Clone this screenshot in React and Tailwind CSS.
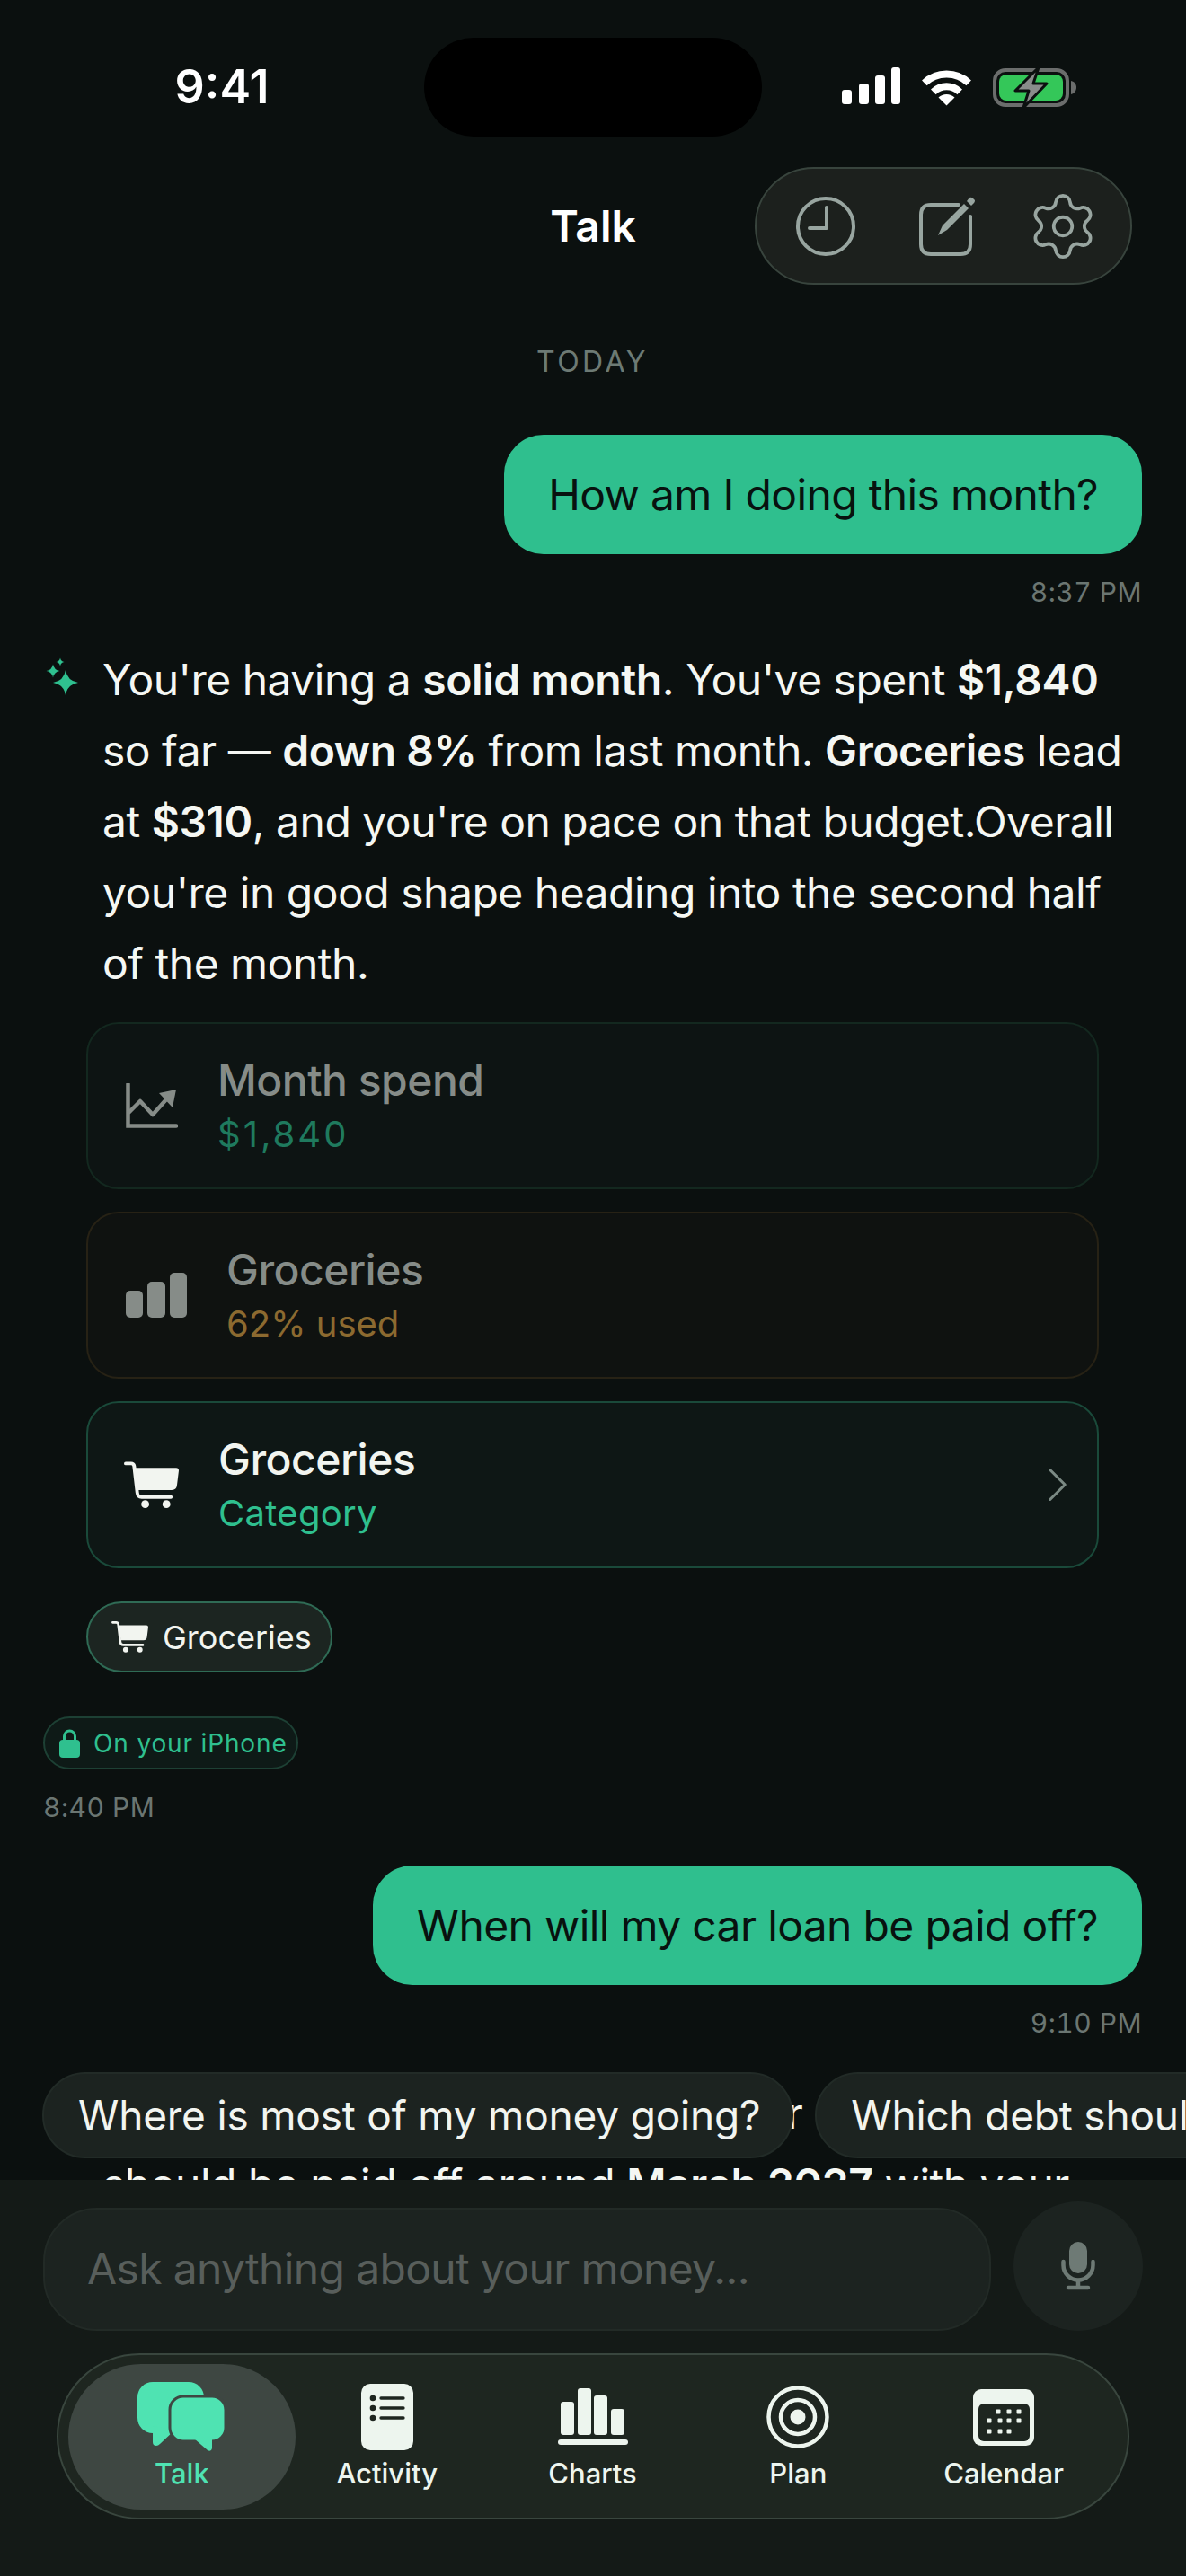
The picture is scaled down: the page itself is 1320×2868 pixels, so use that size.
import { ChevronRight, Settings } from "lucide-react";

function Signal() {
  return (
    <svg width="65" height="41" viewBox="0 0 65 41" fill="#fff">
      <rect x="0" y="25" width="11" height="16" rx="3" />
      <rect x="19" y="18" width="11" height="23" rx="3" />
      <rect x="37" y="9" width="11" height="32" rx="3" />
      <rect x="55" y="0" width="10" height="41" rx="3" />
    </svg>
  );
}

function Wifi() {
  return (
    <svg width="57" height="43" viewBox="0 0 57 43" fill="none" stroke="#fff" strokeWidth="8">
      <path d="M3.8 17.3 A36 36 0 0 1 53.2 17.3" />
      <path d="M13.8 27.3 A21 21 0 0 1 43.2 27.3" />
      <path d="M19.5 33.5 L28.5 42.5 L37.5 33.5 A13 13 0 0 0 19.5 33.5 Z" fill="#fff" stroke="none" />
    </svg>
  );
}

function Battery() {
  return (
    <svg width="94" height="45" viewBox="0 0 94 45" fill="none">
      <rect x="2" y="3" width="81" height="39" rx="12" stroke="#6b6d6c" strokeWidth="4" />
      <rect x="7" y="8" width="71" height="29" rx="8" fill="#34c759" />
      <path d="M87 15 C91 16 93 19 93 22 C93 26 91 29 87 30 Z" fill="#6b6d6c" />
      <path d="M51 0 L25 26 H40 L34 45 L60 18 H45 Z" fill="#8a8c8b" stroke="#0b100f" strokeWidth="3" strokeLinejoin="round" />
    </svg>
  );
}

function Clock() {
  return (
    <svg width="66" height="66" viewBox="0 0 66 66" fill="none" stroke="#98a5a0" strokeWidth="4">
      <circle cx="33" cy="33" r="31" />
      <path d="M34 12 V35 H15" strokeLinecap="round" strokeLinejoin="round" />
    </svg>
  );
}

function Compose() {
  return (
    <svg width="66" height="66" viewBox="0 0 66 66" fill="none" stroke="#98a5a0" strokeWidth="4" className="ml-[6px]">
      <path d="M44 9 H13 Q2 9 2 20 V53 Q2 64 13 64 H46 Q57 64 57 53 V22" strokeLinecap="round" />
      <path d="M21 43 L26 32 L50 8 L55 13 L31 37 Z" fill="#98a5a0" stroke="none" />
      <path d="M53 5 L56 1 Q58 0 60 2 L62 4 Q62 6 61 7 L58 10 Z" fill="#98a5a0" stroke="none" />
    </svg>
  );
}

function Sparkle() {
  const star = (x, y, r) =>
    `M${x} ${y - r} Q${x + r * 0.14} ${y - r * 0.14} ${x + r} ${y} Q${x + r * 0.14} ${y + r * 0.14} ${x} ${y + r} Q${x - r * 0.14} ${y + r * 0.14} ${x - r} ${y} Q${x - r * 0.14} ${y - r * 0.14} ${x} ${y - r} Z`;
  return (
    <svg width="40" height="44" viewBox="0 0 40 44" fill="#2fc08f" className="shrink-0 mt-[14px]">
      <path d={star(25, 29, 14)} />
      <path d={star(11, 16, 7.5)} />
      <path d={star(19, 6, 4.5)} />
    </svg>
  );
}

function Cart({ className }) {
  return (
    <svg viewBox="0 0 62 53" fill="#f2f5f0" className={className}>
      <path d="M2 2 H8 Q11 2 11.500 5 L15 35 Q15.500 40 20 40 H53" fill="none" stroke="#f2f5f0" strokeWidth="4" strokeLinecap="round" />
      <path d="M12 7 H59 Q62 7 62 10 L60 26 Q59.500 32 54 32 H16 Z" />
      <circle cx="24" cy="48" r="4.500" />
      <circle cx="48" cy="48" r="4.500" />
    </svg>
  );
}

function TrendIcon() {
  return (
    <svg width="58" height="50" viewBox="0 0 58 50" fill="none" stroke="#868c88" strokeWidth="4.500" className="shrink-0">
      <path d="M2.500 1 V47.500 H56" strokeLinecap="round" />
      <path d="M3 33 L16 20 L30 35 L46 17" strokeLinejoin="round" />
      <path d="M37 11 L56 7 L52 27 Z" fill="#868c88" stroke="none" />
    </svg>
  );
}

function BarsIcon() {
  return (
    <svg width="68" height="50" viewBox="0 0 68 50" fill="#868c88" className="shrink-0">
      <rect x="0" y="20" width="19" height="30" rx="5" />
      <rect x="24" y="10" width="20" height="40" rx="5" />
      <rect x="49" y="0" width="19" height="50" rx="5" />
    </svg>
  );
}

function TalkIcon() {
  return (
    <svg width="100" height="80" viewBox="0 0 100 80" fill="#4fe3b2">
      <rect x="1" y="1" width="74" height="57" rx="17" />
      <path d="M18 50 V68 Q18 72 22 72 Q24 72 26 70 L42 55 Z" />
      <rect x="37" y="17" width="62" height="50" rx="15" stroke="#3e4742" strokeWidth="3" />
      <path d="M64 64 L79 77 Q83 79 84 75 V64 Z" />
    </svg>
  );
}

function ActivityIcon() {
  return (
    <svg width="58" height="74" viewBox="0 0 58 74" fill="#edf5ee">
      <rect width="58" height="74" rx="10" />
      <g fill="#1e2620">
        <circle cx="13" cy="16" r="3.300" />
        <circle cx="13" cy="27" r="3.300" />
        <circle cx="13" cy="38" r="3.300" />
      </g>
      <path d="M22 16 H47 M22 27 H47 M22 38 H47" stroke="#1e2620" strokeWidth="3.300" strokeLinecap="round" />
    </svg>
  );
}

function ChartsIcon() {
  return (
    <svg width="78" height="64" viewBox="0 0 78 64" fill="#edf5ee">
      <rect x="3" y="15" width="15" height="37" rx="3" />
      <rect x="22" y="0" width="15" height="52" rx="3" />
      <rect x="40" y="8" width="15" height="44" rx="3" />
      <rect x="59" y="23" width="15" height="29" rx="3" />
      <rect x="0" y="57" width="78" height="6" rx="3" />
    </svg>
  );
}

function PlanIcon() {
  return (
    <svg width="70" height="70" viewBox="0 0 70 70" fill="none" stroke="#edf5ee" strokeWidth="4.500">
      <circle cx="35" cy="35" r="32.500" />
      <circle cx="35" cy="35" r="19" />
      <circle cx="35" cy="35" r="8.500" fill="#edf5ee" stroke="none" />
    </svg>
  );
}

function CalendarIcon() {
  const dots = [
    [28, 25], [40, 25], [51, 25],
    [18, 35], [30, 35], [40, 35], [51, 35],
    [18, 47], [30, 47], [40, 47],
  ];
  return (
    <svg width="68" height="63" viewBox="0 0 68 63">
      <rect width="68" height="63" rx="9" fill="#edf5ee" />
      <rect x="6" y="16" width="57" height="42" rx="6" fill="#1e2620" />
      {dots.map(([x, y]) => (
        <rect key={`${x}-${y}`} x={x - 2.500} y={y - 2.500} width="5" height="5" rx="1" fill="#edf5ee" />
      ))}
    </svg>
  );
}

function MicIcon() {
  return (
    <svg width="38" height="54" viewBox="0 0 38 54" fill="none" stroke="#6e7a75" strokeWidth="4.500" strokeLinecap="round">
      <rect x="9" y="0" width="20" height="35" rx="10" fill="#6e7a75" stroke="none" />
      <path d="M2.500 22 V26 A16.500 16.500 0 0 0 35.500 26 V22" />
      <path d="M19 43 V50 M8 51 H30" />
    </svg>
  );
}

function UserBubble({ children }) {
  return (
    <div className="flex justify-end">
      <div className="h-[133px] flex items-center px-[49px] rounded-[44px] bg-[#2fbf8e] text-[#08120f] text-[48px] tracking-[-0.65px] whitespace-nowrap">
        {children}
      </div>
    </div>
  );
}

function Time({ children, className }) {
  return <div className={`text-[30px] leading-[36px] tracking-[0.5px] tabular-nums text-[#6b7672] ${className}`}>{children}</div>;
}

function Bold({ children }) {
  return <b className="font-semibold tracking-[-0.4px]">{children}</b>;
}

function ActionCard({ icon, title, sub, titleColor, subClass, cardColor, chevron }) {
  return (
    <div className={`h-[186px] mx-[48px] flex items-center pl-[42px] pr-[11px] gap-[44px] rounded-[36px] border-2 ${cardColor}`}>
      {icon}
      <div className="flex-1">
        <div className={`text-[48px] leading-[60px] font-medium tracking-[-0.5px] ${titleColor}`}>{title}</div>
        <div className={`text-[40px] leading-[54px] mt-[3px] ${subClass}`}>{sub}</div>
      </div>
      {chevron && <ChevronRight size={66} strokeWidth={1.1} color="#7b8a84" />}
    </div>
  );
}

function Suggestion({ children }) {
  return (
    <div className="h-[96px] shrink-0 flex items-center pl-[38px] pr-[35px] rounded-full bg-[#1c2320] border-2 border-[#222b27] text-[#f2f5f0] text-[46px] tracking-[-0.2px] whitespace-nowrap">
      {children}
    </div>
  );
}

function NavItem({ icon, label, active, className }) {
  return (
    <div className={`flex flex-col items-center justify-center ${className}`}>
      <div className="h-[80px] flex items-center justify-center">{icon}</div>
      <div className={`mt-[3px] text-[31px] leading-[40px] font-medium ${active ? "text-[#4fe3b2]" : "text-[#edf5ee]"}`}>{label}</div>
    </div>
  );
}

export default function App() {
  return (
    <div className="w-[1320px] h-[2868px] flex flex-col overflow-hidden bg-[#0b100f] font-['Inter',sans-serif]">
      {/* Status bar */}
      <div className="h-[186px] shrink-0 flex items-start pt-[42px]">
        <div className="w-[472px] h-[110px] flex items-center justify-center pl-[22px] text-white text-[52px] font-semibold">9:41</div>
        <div className="w-[376px] h-[110px] rounded-[55px] bg-black" />
        <div className="flex-1 flex items-start pt-[33px] pl-[89px] gap-[23px]">
          <Signal />
          <Wifi />
          <Battery />
        </div>
      </div>

      {/* Header */}
      <div className="h-[131px] shrink-0 grid grid-cols-3 items-center pr-[60px]">
        <div />
        <div className="text-center text-white text-[48px] font-semibold pl-[60px]">Talk</div>
        <div className="flex justify-end">
          <div className="w-[420px] h-[131px] flex items-center shrink-0 gap-[65px] pl-[44px] rounded-full bg-[#1c201d] border-2 border-[#38443d]">
            <Clock />
            <Compose />
            <Settings size={82} strokeWidth={1.1} color="#98a5a0" className="ml-[-12px]" />
          </div>
        </div>
      </div>

      {/* Messages */}
      <div className="relative flex-1 min-h-0">
        <div className="h-full overflow-hidden pr-[49px] pl-[48px]">
          <div className="mt-[68px] text-center text-[32px] leading-[36px] tracking-[3.5px] text-[#6d7a74]">TODAY</div>

          <div className="mt-[63px]">
            <UserBubble>How am I doing this month?</UserBubble>
          </div>
          <Time className="mt-[24px] text-right">8:37 PM</Time>

          <div className="mt-[40px] flex gap-[26px] text-[#f5f7f3] text-[48px] leading-[79px] tracking-[-0.5px]">
            <Sparkle />
            <p>
              You're having a <Bold>solid month</Bold>. You've spent <Bold>$1,840</Bold> so far — <Bold>down 8%</Bold> from last month. <Bold>Groceries</Bold> lead at <Bold>$310</Bold>, and you're on pace on that budget.Overall you're in good shape heading into the second half of the month.
            </p>
          </div>

          <div className="mt-[26px] flex flex-col gap-[25px]">
            <ActionCard
              icon={<TrendIcon />}
              title="Month spend"
              sub="$1,840"
              titleColor="text-[#868c88]"
              subClass="text-[#1f7a5e] tracking-[3px]"
              cardColor="bg-[#0d1413] border-[#13281f]"
            />
            <ActionCard
              icon={<BarsIcon />}
              title="Groceries"
              sub="62% used"
              titleColor="text-[#868c88]"
              subClass="text-[#8c6a30]"
              cardColor="bg-[#0f1210] border-[#272215]"
            />
            <ActionCard
              icon={<Cart className="w-[61px] h-[53px] shrink-0 -ml-[2px]" />}
              title="Groceries"
              sub="Category"
              titleColor="text-[#f2f5f0]"
              subClass="text-[#2fc08f] tracking-[0.3px]"
              cardColor="bg-[#0e1715] border-[#1a4a3a]"
              chevron
            />
          </div>

          <div className="mt-[37px] ml-[48px] w-[274px] h-[79px] flex items-center gap-[16px] pl-[26px] rounded-full bg-[#1c2521] border-2 border-[#2f6b55] text-[#f2f5f0] text-[36px]">
            <Cart className="w-[41px] h-[35px]" />
            Groceries
          </div>

          <div className="mt-[49px] w-[284px] h-[59px] flex items-center gap-[15px] pl-[16px] rounded-full bg-[#0e1a17] border-2 border-[#1d4034] text-[#2fc08f] text-[28px] tracking-[0.85px] whitespace-nowrap">
            <svg width="23" height="32" viewBox="0 0 23 32" fill="#2fc08f" className="shrink-0">
              <path d="M5.500 14 V8 A6 6 0 0 1 17.500 8 V14" fill="none" stroke="#2fc08f" strokeWidth="3" />
              <rect x="0" y="12" width="23" height="20" rx="4" />
            </svg>
            On your iPhone
          </div>
          <Time className="mt-[24px]">8:40 PM</Time>

          <div className="mt-[47px]">
            <UserBubble>When will my car loan be paid off?</UserBubble>
          </div>
          <Time className="mt-[24px] text-right">9:10 PM</Time>

          <div className="mt-[43px] pl-[66px] text-[#f5f7f3] text-[48px] leading-[79px] tracking-[-0.5px]">
            Under your current payments, your car loan
            <br />
            should be paid off around <Bold>March 2027</Bold> with your
            <br />
            current payments.
          </div>
        </div>

        {/* Suggestions */}
        <div className="absolute left-[47px] top-[1990px] flex gap-[24px]">
          <Suggestion>Where is most of my money going?</Suggestion>
          <Suggestion>Which debt should I pay off first?</Suggestion>
        </div>
      </div>

      {/* Input and tab bar */}
      <div className="h-[441px] shrink-0 bg-[#141a17] px-[48px]">
        <div className="mt-[24px] flex items-end gap-[25px]">
          <div className="flex-1 h-[137px] flex items-center pl-[47px] pb-[2px] rounded-[60px] bg-[#1c2320] border-2 border-[#222a26] text-[#585e5b] text-[48px] tracking-[-0.65px]">
            Ask anything about your money...
          </div>
          <div className="w-[144px] h-[144px] flex items-center justify-center rounded-full bg-[#1c2320]">
            <MicIcon />
          </div>
        </div>
        <div className="relative mt-[25px] ml-[15px] w-[1194px] h-[185px] flex items-center px-[11px] rounded-full bg-[#1e2620] border-2 border-[#39463e]">
          <NavItem icon={<TalkIcon />} label="Talk" active className="w-[253px] h-[162px] rounded-full bg-[#3e4742]" />
          <NavItem icon={<ActivityIcon />} label="Activity" className="w-[204px]" />
          <NavItem icon={<ChartsIcon />} label="Charts" className="w-[254px]" />
          <NavItem icon={<PlanIcon />} label="Plan" className="w-[204px]" />
          <NavItem icon={<CalendarIcon />} label="Calendar" className="w-[254px]" />
        </div>
      </div>
    </div>
  );
}
